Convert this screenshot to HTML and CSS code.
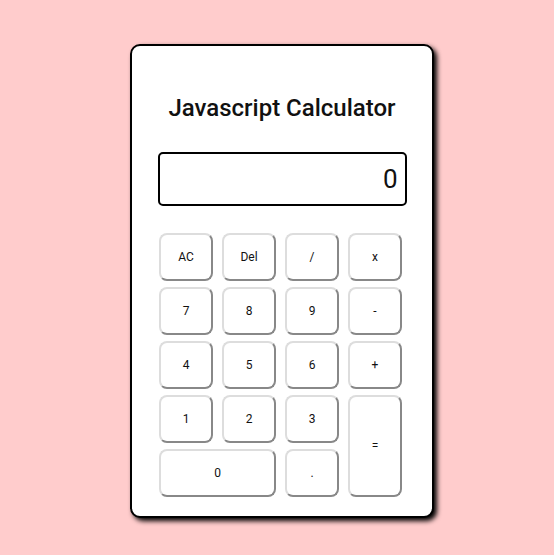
FILE: index.html
```html
<html>
<head>
<title>Javascript Calculator</title>
<meta charset='utf-8'/>
<link rel="stylesheet" href="styles.css">
</head>
<body>
<div id='calc'>
<h2>Javascript Calculator</h2>
<div id='display'>0</div>
<div class='keys'>
<button>AC</button>
<button>Del</button>
<button>/</button>
<button>x</button>
<button>7</button>
<button>8</button>
<button>9</button>
<button>-</button>
<button>4</button>
<button>5</button>
<button>6</button>
<button>+</button>
<button>1</button>
<button>2</button>
<button>3</button>
<button class='equals'>=</button>
<button class='zero'>0</button>
<button>.</button>
</div>
</div>
</body>
</html>
```

FILE: styles.css
```css
body {
	margin: 0;
	background: #ffcccc;
	font-family: "Roboto", "Noto Sans", sans-serif;
}
#calc {
	width: 300px;
	margin: 44px 0 0 130px;
	background: #fff;
	border: 2px solid #000;
	border-radius: 10px;
	box-shadow: 3px 3px 5px #000;
	padding: 0 0 19px 0;
}
h2 {
	margin: 0;
	padding: 48px 0 0 0;
	height: 58px;
	font-size: 24px;
	font-weight: 500;
	text-align: center;
	color: #111;
}
#display {
	width: 227px;
	height: 50px;
	margin: 0 auto 27px auto;
	border: 2px solid #000;
	border-radius: 5px;
	padding: 0 7px 0 11px;
	text-align: right;
	font-size: 26px;
	line-height: 50px;
	color: #111;
}
.keys {
	display: grid;
	grid-template-columns: repeat(4, 54px);
	grid-auto-rows: 48px;
	column-gap: 9px;
	row-gap: 6px;
	padding-left: 27px;
}
.keys button {
	background: #fff;
	border: 2px solid;
	border-color: #ddd #888 #888 #ddd;
	border-radius: 8px;
	font-family: inherit;
	font-size: 12px;
	color: #111;
	padding: 0;
}
.equals {
	grid-column: 4;
	grid-row: 4 / span 2;
}
.zero {
	grid-column: 1 / span 2;
}
```
